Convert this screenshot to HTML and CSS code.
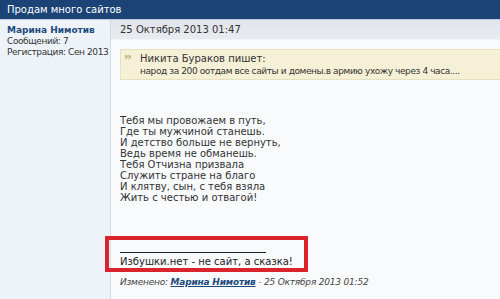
FILE: index.html
```html
<!DOCTYPE html>
<html lang="ru">
<head>
<meta charset="UTF-8" />
<title>Продам много сайтов</title>
<link rel="stylesheet" href="styles.css">
</head>
<body>

<div class="thread-title">Продам много сайтов</div>

<div class="post">
  <div class="userinfo">
    <div class="username">Марина Нимотив</div>
    <div class="userstat">Сообщений: 7</div>
    <div class="userstat">Регистрация: Сен 2013</div>
  </div>

  <div class="postmain">
    <div class="postdate">25 Октября 2013 01:47</div>
    <div class="postbody">
      <div class="quote">
        <span class="quote-mark">”</span>
        <div class="quote-text">
          <div>Никита Бураков пишет:</div>
          <div class="quote-msg">народ за 200 оотдам все сайты и домены.в армию ухожу через 4 часа....</div>
        </div>
      </div>

      <div class="poem">
        Тебя мы провожаем в путь,<br>
        Где ты мужчиной станешь.<br>
        И детство больше не вернуть,<br>
        Ведь время не обманешь.<br>
        Тебя Отчизна призвала<br>
        Служить стране на благо<br>
        И клятву, сын, с тебя взяла<br>
        Жить с честью и отвагой!
      </div>

      <div class="signature">
        <div class="sig-line"></div>
        <div>Избушки.нет - не сайт, а сказка!</div>
        <div class="highlight"></div>
      </div>

      <div class="edited">
        Изменено: <a href="#">Марина Нимотив</a> - 25 Октября 2013 01:52
      </div>
    </div>
  </div>
</div>

</body>
</html>
```

FILE: styles.css
```css
body {
  margin: 0;
  font-family: "DejaVu Sans", Verdana, sans-serif;
  font-size: 10px;
  color: #222;
  background: #f8fafc;
  height: 299px;
  overflow: hidden;
}

.thread-title {
  background: #1b4376;
  color: #fff;
  height: 19px;
  line-height: 19px;
  padding-left: 7px;
  border-bottom: 1px solid #b9cde4;
}

.post {
  display: flex;
  height: 279px;
}

.userinfo {
  width: 103px;
  flex-shrink: 0;
  background: #eef3f9;
  border-right: 1px solid #d3dae4;
  padding: 4px 0 0 7px;
  color: #333;
  font-size: 9px;
  letter-spacing: -0.4px;
  line-height: 11px;
  white-space: nowrap;
}

.username {
  color: #1d4a7c;
  font-weight: bold;
  font-size: 9px;
  letter-spacing: 0;
  line-height: 13px;
  margin-bottom: -1px;
}

.postmain {
  flex: 1;
  background: #f8fafc;
}

.postdate {
  height: 19px;
  line-height: 19px;
  padding-left: 9px;
  background: linear-gradient(#e1e5eb, #e8ebf0);
  border-bottom: 1px solid #f1f3f7;
  color: #333;
}

.postbody {
  padding: 9px 0 0 9px;
}

.quote {
  display: flex;
  background: #f6f0d6;
  border: 1px solid #e8e1bf;
  border-right: none;
  padding: 3px 0 2px 3px;
  line-height: 12px;
  color: #333;
  white-space: nowrap;
}

.quote-mark {
  width: 16px;
  color: #bdb37a;
  font-family: "Liberation Serif", serif;
  font-weight: bold;
  font-size: 15px;
  line-height: 15px;
}

.quote-msg {
  font-size: 9px;
  letter-spacing: -0.4px;
}

.poem {
  margin-top: 35px;
  line-height: 11px;
  color: #333;
}

.signature {
  position: relative;
  margin-top: 49px;
  line-height: 12px;
  color: #222;
}

.sig-line {
  width: 146px;
  border-top: 1px solid #222;
  margin-bottom: 3px;
}

.highlight {
  position: absolute;
  left: -15px;
  top: -16px;
  width: 195px;
  height: 28px;
  border: 4px solid #d9232d;
}

.edited {
  margin-top: 8px;
  line-height: 12px;
  font-size: 9px;
  letter-spacing: -0.2px;
  font-style: italic;
  color: #444;
  white-space: nowrap;
}

.edited a {
  color: #1d4a7c;
  font-weight: bold;
}
```
